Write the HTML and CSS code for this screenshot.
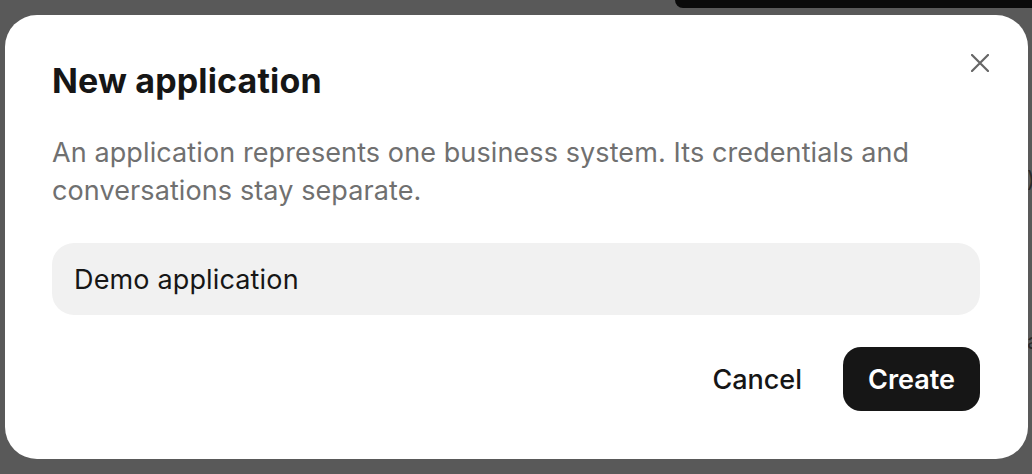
FILE: index.html
```html
<!DOCTYPE html>
<html lang="en">
<head>
<meta charset="utf-8">
<title>New application</title>
<link rel="stylesheet" href="styles.css">
</head>
<body>
<div class="backdrop-page">
  <div class="topbar"></div>
  <span class="peek peek-1">)</span>
  <span class="peek peek-2">a</span>
</div>
<div class="overlay">
  <div class="modal" role="dialog" aria-labelledby="dlg-title">
    <button class="close" aria-label="Close">
      <svg viewBox="0 0 18 18" width="18" height="18"><path d="M1 1L17 17M17 1L1 17" stroke="#666" stroke-width="2.2" stroke-linecap="round"/></svg>
    </button>
    <h2 id="dlg-title" class="title">New application</h2>
    <p class="desc">An application represents one business system. Its credentials and conversations stay separate.</p>
    <div class="field">Demo application</div>
    <div class="actions">
      <button class="btn btn-ghost">Cancel</button>
      <button class="btn btn-primary">Create</button>
    </div>
  </div>
</div>
</body>
</html>
```
FILE: styles.css
```css
* { box-sizing: border-box; }
html, body {
  margin: 0;
  width: 1032px;
  height: 474px;
  overflow: hidden;
}
body {
  background: #595959;
  font-family: Inter, "Noto Sans", sans-serif;
  color: #161616;
}
.backdrop-page {
  position: relative;
  width: 100%;
  height: 100%;
}
.topbar {
  position: absolute;
  left: 675px;
  top: 0;
  right: 0;
  height: 8px;
  background: #0a0a0a;
  border-bottom-left-radius: 12px;
}
.peek {
  position: absolute;
  left: 1027px;
  font-size: 22px;
  color: #2a2a2a;
}
.peek-1 { top: 166px; }
.peek-2 { top: 328px; }
.overlay {
  position: fixed;
  inset: 0;
  padding: 15px 4px 15px 5px;
  display: flex;
}
.modal {
  position: relative;
  flex: 1;
  background: #ffffff;
  border-radius: 32px;
  padding: 46px 48px 48px 47px;
  display: flex;
  flex-direction: column;
}
.close {
  position: absolute;
  top: 39px;
  right: 39px;
  width: 18px;
  height: 18px;
  padding: 0;
  border: 0;
  background: none;
  display: flex;
}
.title {
  margin: 0;
  font-size: 34px;
  line-height: 40px;
  font-weight: 700;
  letter-spacing: 0.15px;
  color: #161616;
}
.desc {
  margin: 33px 0 0;
  font-size: 27px;
  line-height: 38px;
  letter-spacing: 0.1px;
  color: #707070;
  max-width: 900px;
}
.field {
  margin-top: 33px;
  height: 72px;
  border-radius: 22px;
  background: #f1f1f1;
  padding: 0 22px;
  display: flex;
  align-items: center;
  font-size: 27px;
  letter-spacing: 0.15px;
  color: #161616;
}
.actions {
  margin-top: 32px;
  display: flex;
  justify-content: flex-end;
  align-items: center;
  gap: 25px;
}
.btn {
  font-family: inherit;
  font-size: 27px;
  font-weight: 500;
  border: 0;
  height: 64px;
  border-radius: 18px;
  padding: 0 25px;
  cursor: pointer;
}
.btn-ghost {
  background: none;
  color: #161616;
  padding: 0 16px;
}
.btn-primary {
  background: #161616;
  color: #ffffff;
  font-weight: 600;
}
```
